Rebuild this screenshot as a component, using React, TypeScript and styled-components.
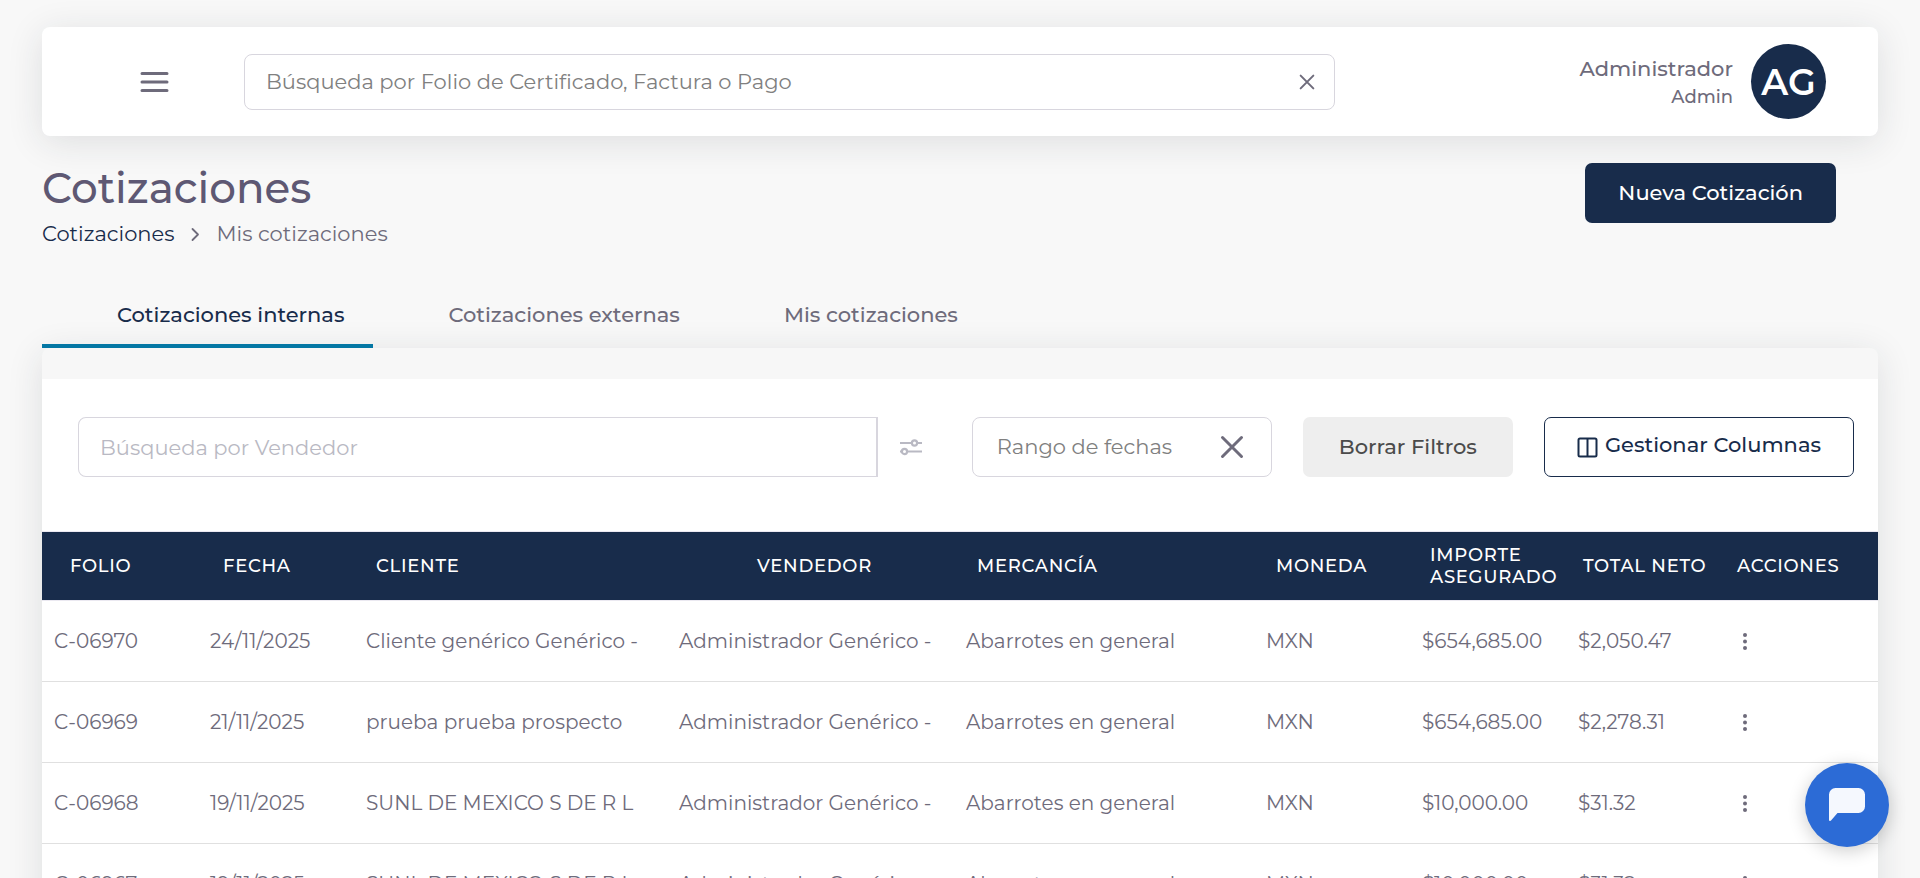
import React from "react";
import styled, { createGlobalStyle, css } from "styled-components";

const navy = "#182c4b";
const slate = "#6e6b7b";
const line = "#d8d6de";

const GlobalStyle = createGlobalStyle`
  *, *::before, *::after { box-sizing: border-box; }
  body {
    margin: 0;
    background: #f8f8f8;
    color: ${slate};
    font-family: Montserrat, Inter, sans-serif;
    font-size: 21px;
    line-height: 30px;
  }
  button, input { font: inherit; color: inherit; }
  button { cursor: pointer; }
`;

const Page = styled.div`
  height: 100vh;
  overflow: hidden;
  padding: 27px 42px 0;
`;

const TopBar = styled.header`
  display: flex;
  align-items: center;
  padding: 17px 52px 17px 98px;
  border-radius: 8px;
  background: #fff;
  box-shadow: 0 6px 36px rgba(34, 41, 47, 0.12);
`;

const IconButton = styled.button<{ $faint?: boolean }>`
  display: flex;
  align-items: center;
  justify-content: center;
  flex: none;
  padding: 0;
  border: 0;
  background: none;
  color: ${(p) => (p.$faint ? "#b9b9c3" : slate)};
`;

const GlobalSearch = styled.form`
  display: flex;
  align-items: center;
  flex: 1048 1 0;
  height: 56px;
  margin-left: 75px;
  padding: 0 19px 0 21px;
  border: 1px solid ${line};
  border-radius: 8px;
`;

const BareInput = styled.input`
  flex: 1;
  min-width: 0;
  padding: 0;
  border: 0;
  outline: 0;
  background: none;
  &::placeholder { color: #808080; opacity: 1; }
`;

const Account = styled.div`
  display: flex;
  align-items: center;
  justify-content: flex-end;
  gap: 18px;
  flex: 490 1 0;
`;

const AccountText = styled.div`
  display: flex;
  flex-direction: column;
  padding-top: 2px;
  text-align: right;
  font-weight: 500;
`;

const AccountName = styled.span`
  line-height: 28px;
`;

const AccountRole = styled.span`
  font-size: 18px;
  line-height: 28px;
`;

const Avatar = styled.div`
  display: flex;
  align-items: center;
  justify-content: center;
  width: 75px;
  height: 75px;
  border-radius: 50%;
  background: ${navy};
  color: #fff;
  font-size: 36px;
  font-weight: 600;
`;

const PageHead = styled.div`
  display: flex;
  justify-content: space-between;
  align-items: flex-start;
  padding: 27px 42px 0 0;
`;

const Title = styled.h1`
  margin: 0;
  color: #5e5873;
  font-size: 42px;
  font-weight: 500;
  line-height: 50px;
`;

const Crumbs = styled.nav`
  display: flex;
  align-items: center;
  gap: 14px;
  padding-top: 6px;
`;

const CrumbLink = styled.a`
  color: ${navy};
  text-decoration: none;
`;

const Button = styled.button<{ $kind: "primary" | "muted" | "outline" }>`
  display: flex;
  align-items: center;
  justify-content: center;
  gap: 7px;
  flex: none;
  height: 60px;
  padding: 0 32px;
  border: 1px solid transparent;
  border-radius: 7px;
  font-weight: 500;
  white-space: nowrap;
  ${(p) => p.$kind === "primary" && css`background: ${navy}; color: #fff;`}
  ${(p) => p.$kind === "muted" && css`
    padding: 0 35px;
    background: #eee;
    color: #4b4b4b;
  `}
  ${(p) => p.$kind === "outline" && css`
    padding-bottom: 4px;
    border-color: ${navy};
    background: #fff;
    color: ${navy};
    svg { margin-top: 4px; }
  `}
`;

const Tabs = styled.div`
  display: flex;
  margin-top: 51px;
`;

const Tab = styled.button<{ $active?: boolean }>`
  height: 48px;
  padding: 0 29px 14px 75px;
  border: 0;
  border-bottom: 4px solid ${(p) => (p.$active ? "#0477a4" : "transparent")};
  background: none;
  color: ${(p) => (p.$active ? navy : slate)};
  font-weight: 500;
  line-height: 30px;
  white-space: nowrap;
`;

const Panel = styled.section`
  padding-top: 31px;
  border-radius: 8px;
  background: #f7f7f7;
  box-shadow: 0 6px 36px rgba(34, 41, 47, 0.12);
`;

const Filters = styled.div`
  display: flex;
  align-items: center;
  gap: 31px;
  padding: 38px 24px 54px 36px;
  background: #fff;
`;

const SellerFilter = styled.div`
  display: flex;
  flex: 1;
  min-width: 0;
  gap: 22px;
  margin-right: 19px;
`;

const SellerInput = styled.input`
  flex: 1;
  min-width: 0;
  height: 60px;
  padding: 0 21px;
  border: 1px solid ${line};
  border-right-width: 2px;
  border-radius: 8px 0 0 8px;
  outline: 0;
  &::placeholder { color: #b9b9c3; opacity: 1; }
`;

const DateFilter = styled.div`
  display: flex;
  align-items: center;
  flex: none;
  width: 300px;
  height: 60px;
  padding: 0 27px 0 24px;
  border: 1px solid ${line};
  border-radius: 8px;
`;

const Table = styled.table`
  display: block;
  border-top: 1px solid #ebe9f1;
  background: #fff;
  text-align: left;
`;

const Body = styled.tbody`
  display: block;
`;

const Head = styled.thead`
  display: block;
`;

const HeadRow = styled.tr`
  display: grid;
  grid-template-columns: 153fr 153fr 381fr 220fr 299fr 154fr 153fr 154fr 141fr;
  align-items: center;
  height: 69px;
  padding-left: 28px;
  border-bottom: 1px solid #ebe9f1;
  background: ${navy};
`;

const HeadCell = styled.th`
  min-width: 0;
  padding: 0 20px 0 0;
  color: #fff;
  font-size: 18px;
  font-weight: 500;
  line-height: 22px;
  letter-spacing: 0.04em;
`;

const Row = styled.tr`
  display: grid;
  grid-template-columns: 156fr 156fr 313fr 287fr 300fr 156fr 156fr 156fr 156fr;
  align-items: center;
  height: 81px;
  border-bottom: 1px solid #e0e0e0;
`;

const Cell = styled.td`
  min-width: 0;
  padding: 0 12px;
  font-size: 20px;
  white-space: nowrap;
`;

const ChatButton = styled.button`
  position: fixed;
  right: 31px;
  bottom: 31px;
  display: flex;
  align-items: center;
  justify-content: center;
  width: 84px;
  height: 84px;
  padding: 0;
  border: 0;
  border-radius: 50%;
  background: #2c6bd6;
  box-shadow: 0 4px 18px rgba(0, 0, 0, 0.2);
`;

const Cross = ({ size }: { size: number }) => (
  <svg width={size} height={size} viewBox="0 0 24 24" fill="none" stroke="currentColor" strokeWidth="3" strokeLinecap="round">
    <path d="M2.500 2.500l19 19M21.500 2.500l-19 19" />
  </svg>
);

const MenuIcon = () => (
  <svg width="29" height="22" viewBox="0 0 29 22" fill="none" stroke="currentColor" strokeWidth="3" strokeLinecap="round">
    <path d="M2 2.500h25M2 11h25M2 19.500h25" />
  </svg>
);

const ChevronIcon = () => (
  <svg width="14" height="16" viewBox="0 0 14 16" fill="none" stroke="currentColor" strokeWidth="1.800" strokeLinecap="round" strokeLinejoin="round">
    <path d="M4.500 3l5.500 5.500-5.500 5.500" />
  </svg>
);

const SlidersIcon = () => (
  <svg width="22" height="18" viewBox="0 0 22 18" fill="none" stroke="currentColor" strokeWidth="2.200">
    <path d="M0 5h11.500M17 5h5M0 13.500h2M7 13.500h15" />
    <circle cx="14.500" cy="5" r="2.600" />
    <circle cx="4.500" cy="13.500" r="2.600" />
  </svg>
);

const ColumnsIcon = () => (
  <svg width="21" height="21" viewBox="0 0 21 21" fill="none" stroke="currentColor" strokeWidth="2">
    <rect x="1.500" y="1.500" width="18" height="18" rx="1.500" />
    <path d="M10.500 1.500v18" />
  </svg>
);

const DotsIcon = () => (
  <svg width="24" height="24" viewBox="0 0 24 24" fill="currentColor">
    <circle cx="11" cy="6" r="2" />
    <circle cx="11" cy="12.500" r="2" />
    <circle cx="11" cy="19" r="2" />
  </svg>
);

const ChatIcon = () => (
  <svg width="36" height="34" viewBox="0 0 36 34" fill="#f5f8fe">
    <path d="M6.500 0h23a6.500 6.500 0 0 1 6.500 6.500v12a6.500 6.500 0 0 1-6.500 6.500H8.500L2 32.600c-.8.900-2 .3-2-.8V6.500A6.500 6.500 0 0 1 6.500 0z" />
  </svg>
);

const columns = ["FOLIO", "FECHA", "CLIENTE", "VENDEDOR", "MERCANCÍA", "MONEDA", "IMPORTE ASEGURADO", "TOTAL NETO", "ACCIONES"];

const quotes = [
  ["C-06970", "24/11/2025", "Cliente genérico Genérico -", "Administrador Genérico -", "Abarrotes en general", "MXN", "$654,685.00", "$2,050.47"],
  ["C-06969", "21/11/2025", "prueba prueba prospecto", "Administrador Genérico -", "Abarrotes en general", "MXN", "$654,685.00", "$2,278.31"],
  ["C-06968", "19/11/2025", "SUNL DE MEXICO S DE R L", "Administrador Genérico -", "Abarrotes en general", "MXN", "$10,000.00", "$31.32"],
  ["C-06967", "19/11/2025", "SUNL DE MEXICO S DE R L", "Administrador Genérico -", "Abarrotes en general", "MXN", "$10,000.00", "$31.32"],
];

export default function App() {
  return (
    <Page>
      <GlobalStyle />
      <TopBar>
        <IconButton type="button" aria-label="Menú"><MenuIcon /></IconButton>
        <GlobalSearch role="search">
          <BareInput aria-label="Búsqueda general" placeholder="Búsqueda por Folio de Certificado, Factura o Pago" />
          <IconButton type="reset" aria-label="Limpiar búsqueda"><Cross size={16} /></IconButton>
        </GlobalSearch>
        <Account>
          <AccountText>
            <AccountName>Administrador</AccountName>
            <AccountRole>Admin</AccountRole>
          </AccountText>
          <Avatar>AG</Avatar>
        </Account>
      </TopBar>

      <main>
        <PageHead>
          <div>
            <Title>Cotizaciones</Title>
            <Crumbs aria-label="Ruta">
              <CrumbLink href="#cotizaciones">Cotizaciones</CrumbLink>
              <ChevronIcon />
              <span>Mis cotizaciones</span>
            </Crumbs>
          </div>
          <Button type="button" $kind="primary">Nueva Cotización</Button>
        </PageHead>

        <Tabs role="tablist">
          <Tab type="button" role="tab" aria-selected="true" $active>Cotizaciones internas</Tab>
          <Tab type="button" role="tab" aria-selected="false">Cotizaciones externas</Tab>
          <Tab type="button" role="tab" aria-selected="false">Mis cotizaciones</Tab>
        </Tabs>

        <Panel>
          <Filters>
            <SellerFilter>
              <SellerInput aria-label="Vendedor" placeholder="Búsqueda por Vendedor" />
              <IconButton type="button" aria-label="Opciones de filtro" $faint><SlidersIcon /></IconButton>
            </SellerFilter>
            <DateFilter>
              <BareInput aria-label="Fechas" placeholder="Rango de fechas" />
              <IconButton type="button" aria-label="Quitar fechas"><Cross size={24} /></IconButton>
            </DateFilter>
            <Button type="button" $kind="muted">Borrar Filtros</Button>
            <Button type="button" $kind="outline"><ColumnsIcon />Gestionar Columnas</Button>
          </Filters>
          <Table>
            <Head>
              <HeadRow>
                {columns.map((name) => <HeadCell key={name} scope="col">{name}</HeadCell>)}
              </HeadRow>
            </Head>
            <Body>
              {quotes.map((quote) => (
                <Row key={quote[0]}>
                  {quote.map((value, i) => <Cell key={i}>{value}</Cell>)}
                  <Cell>
                    <IconButton type="button" aria-label={`Acciones de ${quote[0]}`}><DotsIcon /></IconButton>
                  </Cell>
                </Row>
              ))}
            </Body>
          </Table>
        </Panel>
      </main>

      <ChatButton type="button" aria-label="Abrir chat"><ChatIcon /></ChatButton>
    </Page>
  );
}
